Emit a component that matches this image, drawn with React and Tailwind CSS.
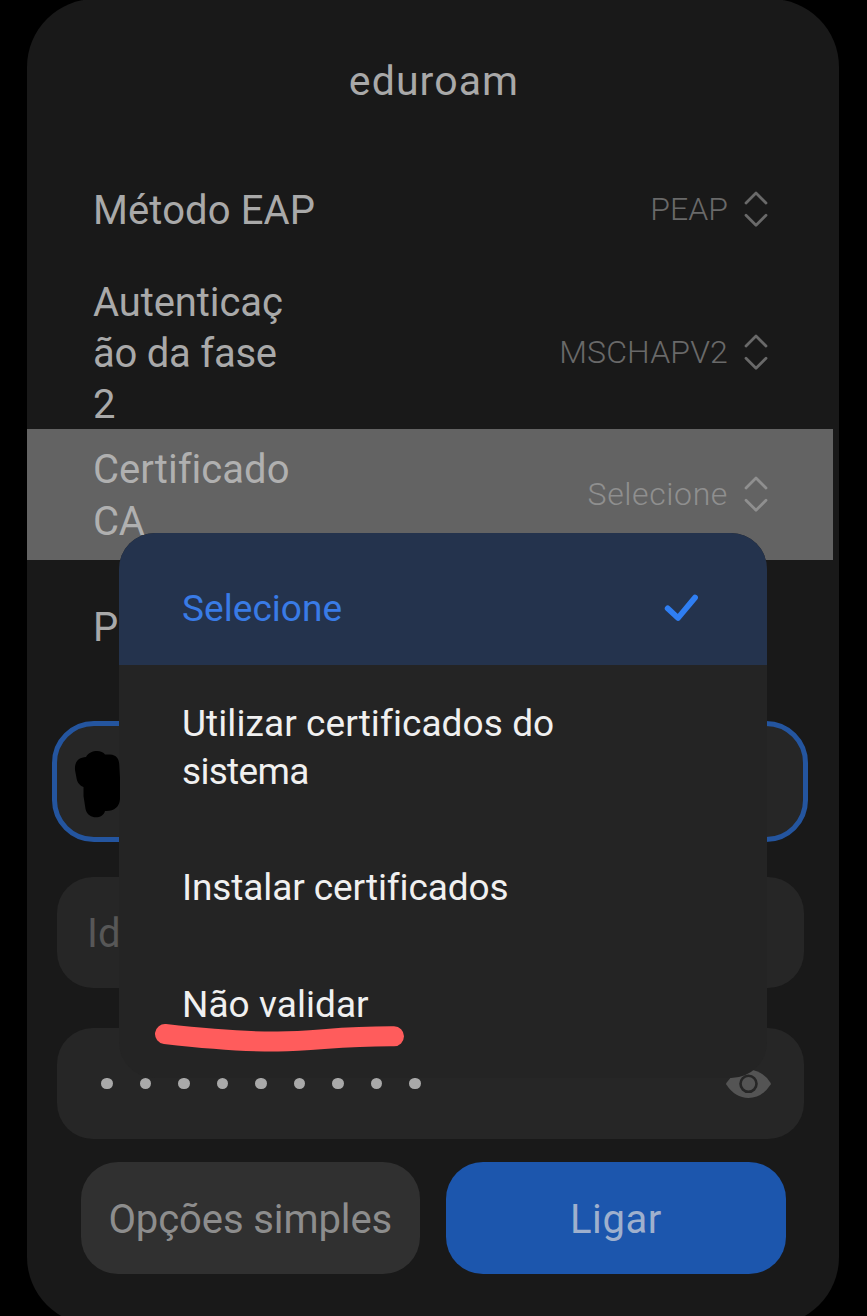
import React from "react";

function UpDown() {
  return (
    <svg width="24" height="36" viewBox="0 0 24 36" fill="none" stroke="currentColor" strokeWidth="2.8" strokeLinecap="round" strokeLinejoin="round">
      <path d="M2 12 L12 1.9 L22 12" />
      <path d="M2 24.2 L12 34.2 L22 24.2" />
    </svg>
  );
}

function Row({ lines, value, valueClass, className }) {
  return (
    <div className={"flex shrink-0 items-center justify-between pl-[66px] " + className}>
      <div className="flex flex-col pt-[2px] text-[40px] leading-[51.3px] text-[#a9a9a9]">
        {lines.map(([text, spacing]) => (
          <span key={text} className={"whitespace-nowrap " + spacing}>{text}</span>
        ))}
      </div>
      {value && (
        <div className={"flex items-center gap-[16px] pb-[2px] font-light " + valueClass}>
          <span className="text-[32px] leading-[36px]">{value}</span>
          <UpDown />
        </div>
      )}
    </div>
  );
}

function Option({ children, className }) {
  return (
    <li className={"flex items-center pl-[63px] text-[37px] leading-[48px] text-[#f0f0f0] " + className}>
      {children}
    </li>
  );
}

const dots = [0, 1, 2, 3, 4, 5, 6, 7, 8];

export default function App() {
  return (
    <div className="relative h-[1316px] w-[867px] overflow-hidden bg-black font-['Roboto','Liberation_Sans',sans-serif]">
      <main className="ml-[27px] -mt-px flex h-[1326px] w-[812px] flex-col rounded-[68px] bg-[#191919]">
        <h1 className="mt-px flex h-[143px] shrink-0 justify-center pl-[2px] pt-[56px] text-[41px] leading-[51px] tracking-[1.1px] text-[#a9a9a9]">
          eduroam
        </h1>

        <Row className="h-[133px] pr-[71px]" lines={[["Método EAP", "tracking-[0.1px]"]]} value="PEAP" valueClass="text-[#696969] tracking-[0.05px]" />
        <Row
          className="h-[153px] pr-[71px]"
          lines={[
            ["Autenticaç", "tracking-[-0.1px]"],
            ["ão da fase", "tracking-[-0.25px]"],
            ["2", "tracking-[0px]"],
          ]}
          value="MSCHAPV2"
          valueClass="text-[#696969] tracking-[0.15px]"
        />
        <Row
          className="h-[131px] w-[806px] bg-[#636363] pr-[65px] [&>div:first-child]:text-[#b0b0b0]"
          lines={[
            ["Certificado", "tracking-[0.02px]"],
            ["CA", "tracking-[-0.3px]"],
          ]}
          value="Selecione"
          valueClass="text-[#8f8f8f] tracking-[0.6px]"
        />
        <Row className="h-[133px]" lines={[["P", "tracking-[0px]"]]} />

        <div className="ml-[25px] mt-[28px] h-[121px] w-[756px] shrink-0 rounded-[42px] border-[5px] border-[#24559f] bg-[#262626]" />
        <div className="ml-[30px] mt-[35px] flex h-[111px] w-[747px] shrink-0 items-center rounded-[36px] bg-[#262626] pl-[30px] text-[40px] text-[#575757]">
          <span className="mt-[3px]">Id</span>
        </div>
        <div className="ml-[30px] mt-[40px] flex h-[111px] w-[747px] shrink-0 items-center justify-between rounded-[36px] bg-[#262626] pl-[44px] pr-[33px]">
          <div className="flex gap-[27.05px]">
            {dots.map((d) => (
              <span key={d} className="size-[11.5px] rounded-full bg-[#a9a9a9]" />
            ))}
          </div>
          <svg width="45" height="30" viewBox="0 0 45 30">
            <path d="M0.3 14 Q9 0.8 22.5 0.8 Q36 0.8 44.7 14 Q45 15 44.7 15.6 Q36 29 22.5 29 Q9 29 0.3 15.6 Q0 15 0.3 14 Z" fill="#545454" />
            <circle cx="22.5" cy="14.8" r="8" fill="#545454" stroke="#262626" strokeWidth="2.6" />
          </svg>
        </div>

        <div className="mt-[23px] flex shrink-0 gap-[26.5px] pl-[54px] text-[40px]">
          <button className="flex h-[112px] w-[338.5px] items-center justify-center rounded-[37px] bg-[#303030] pt-[3px] tracking-[-0.1px] text-[#8d8d8d]">
            Opções simples
          </button>
          <button className="flex h-[112px] w-[340px] items-center justify-center rounded-[37px] bg-[#1c56ad] pt-[3px] tracking-[0.6px] text-[#9fb0cd]">
            Ligar
          </button>
        </div>
      </main>

      <ul className="absolute left-[119px] top-[533px] h-[545px] w-[648px] overflow-hidden rounded-[36px] bg-[#242424]">
        <li className="flex h-[131.5px] items-center justify-between bg-[#24334d] pl-[63px] pr-[68px] pt-[21px] text-[37px] leading-[48px] tracking-[0.05px] text-[#397be6]">
          Selecione
          <svg width="36" height="30" viewBox="0 0 36 30" className="-mt-[2px]" fill="none" stroke="#2f7ef2" strokeWidth="5.8" strokeLinecap="round" strokeLinejoin="round">
            <path d="M4.700 15.4 L15 25 L32 4.6" />
          </svg>
        </li>
        <Option className="h-[165px]">
          <span className="flex flex-col pt-px">
            <span className="tracking-[0.08px]">Utilizar certificados do</span>
            <span className="tracking-[-0.7px]">sistema</span>
          </span>
        </Option>
        <Option className="h-[116.5px] tracking-[-0.1px]">Instalar certificados</Option>
        <Option className="h-[116.5px] pt-px tracking-[0.05px]">Não validar</Option>
      </ul>

      <svg className="absolute left-[150px] top-[1015px]" width="260" height="44" viewBox="150 1015 260 44" fill="none">
        <path d="M165 1034 C200 1038 240 1041.8 278 1041.5 C318 1041 340 1036 394 1036.3" stroke="#ff5c5c" strokeWidth="20" strokeLinecap="round" />
      </svg>

      <svg className="absolute left-[70px] top-[745px]" width="54" height="78" viewBox="70 745 54 78">
        <path d="M75 770 C74.500 762 78 757.500 86 757 C90 749.500 102 749.500 105 754.500 H110 C117 755 119 759 119.300 765 L120 778 V799 C119.500 807 114 811.500 105 811 C103 819.500 88 820 85.500 809 L83.500 796 V787 C78.500 785 77 781 76.500 778 Z" fill="#000" />
      </svg>
    </div>
  );
}
